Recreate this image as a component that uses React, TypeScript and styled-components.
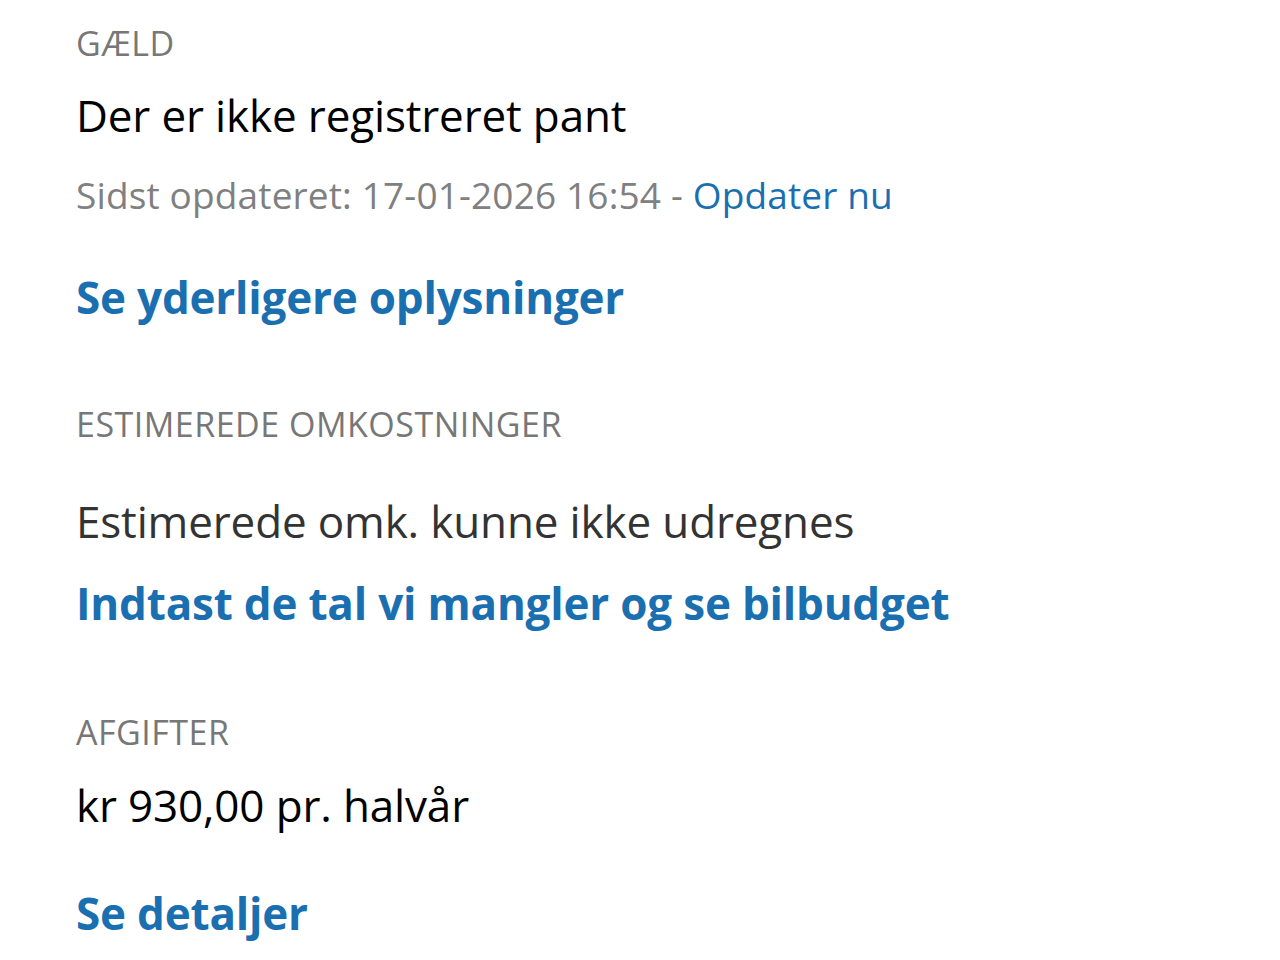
import styled, { createGlobalStyle } from 'styled-components';

const GlobalStyle = createGlobalStyle`
    body {
        margin: 0;
        background: #ffffff;
        font-family: 'Open Sans', 'Noto Sans', sans-serif;
    }
`;

const Page = styled.div`
    display: flex;
    flex-direction: column;
    padding: 23px 76px 0;
`;

const Section = styled.section<{ $top?: number }>`
    display: flex;
    flex-direction: column;
    margin-top: ${(p) => p.$top ?? 0}px;
`;

const Label = styled.div`
    font-size: 34px;
    line-height: 40px;
    color: #777777;
    letter-spacing: 0.5px;
`;

const Value = styled.div<{ $muted?: boolean; $top: number }>`
    margin-top: ${(p) => p.$top}px;
    font-size: 44px;
    line-height: 52px;
    color: ${(p) => (p.$muted ? '#333333' : '#000000')};
    letter-spacing: -0.15px;
`;

const Meta = styled.div`
    margin-top: 30px;
    font-size: 37px;
    line-height: 48px;
    color: #808080;
    letter-spacing: 0.15px;
`;

const InlineLink = styled.a`
    color: #1a6fb0;
    text-decoration: none;
`;

const ActionLink = styled.a<{ $top: number }>`
    margin-top: ${(p) => p.$top}px;
    font-size: 44px;
    line-height: 56px;
    font-weight: 700;
    color: #1a6fb0;
    text-decoration: none;
    letter-spacing: -0.2px;
`;

export default function App() {
    return (
        <>
            <GlobalStyle />
            <Page>
                <Section>
                    <Label>GÆLD</Label>
                    <Value $top={26}>Der er ikke registreret pant</Value>
                    <Meta>
                        Sidst opdateret: 17-01-2026 16:54 - <InlineLink>Opdater nu</InlineLink>
                    </Meta>
                    <ActionLink $top={50}>Se yderligere oplysninger</ActionLink>
                </Section>
                <Section $top={79}>
                    <Label>ESTIMEREDE OMKOSTNINGER</Label>
                    <Value $muted $top={51}>
                        Estimerede omk. kunne ikke udregnes
                    </Value>
                    <ActionLink $top={28}>Indtast de tal vi mangler og se bilbudget</ActionLink>
                </Section>
                <Section $top={81}>
                    <Label>AFGIFTER</Label>
                    <Value $top={27}>kr 930,00 pr. halvår</Value>
                    <ActionLink $top={54}>Se detaljer</ActionLink>
                </Section>
            </Page>
        </>
    );
}
